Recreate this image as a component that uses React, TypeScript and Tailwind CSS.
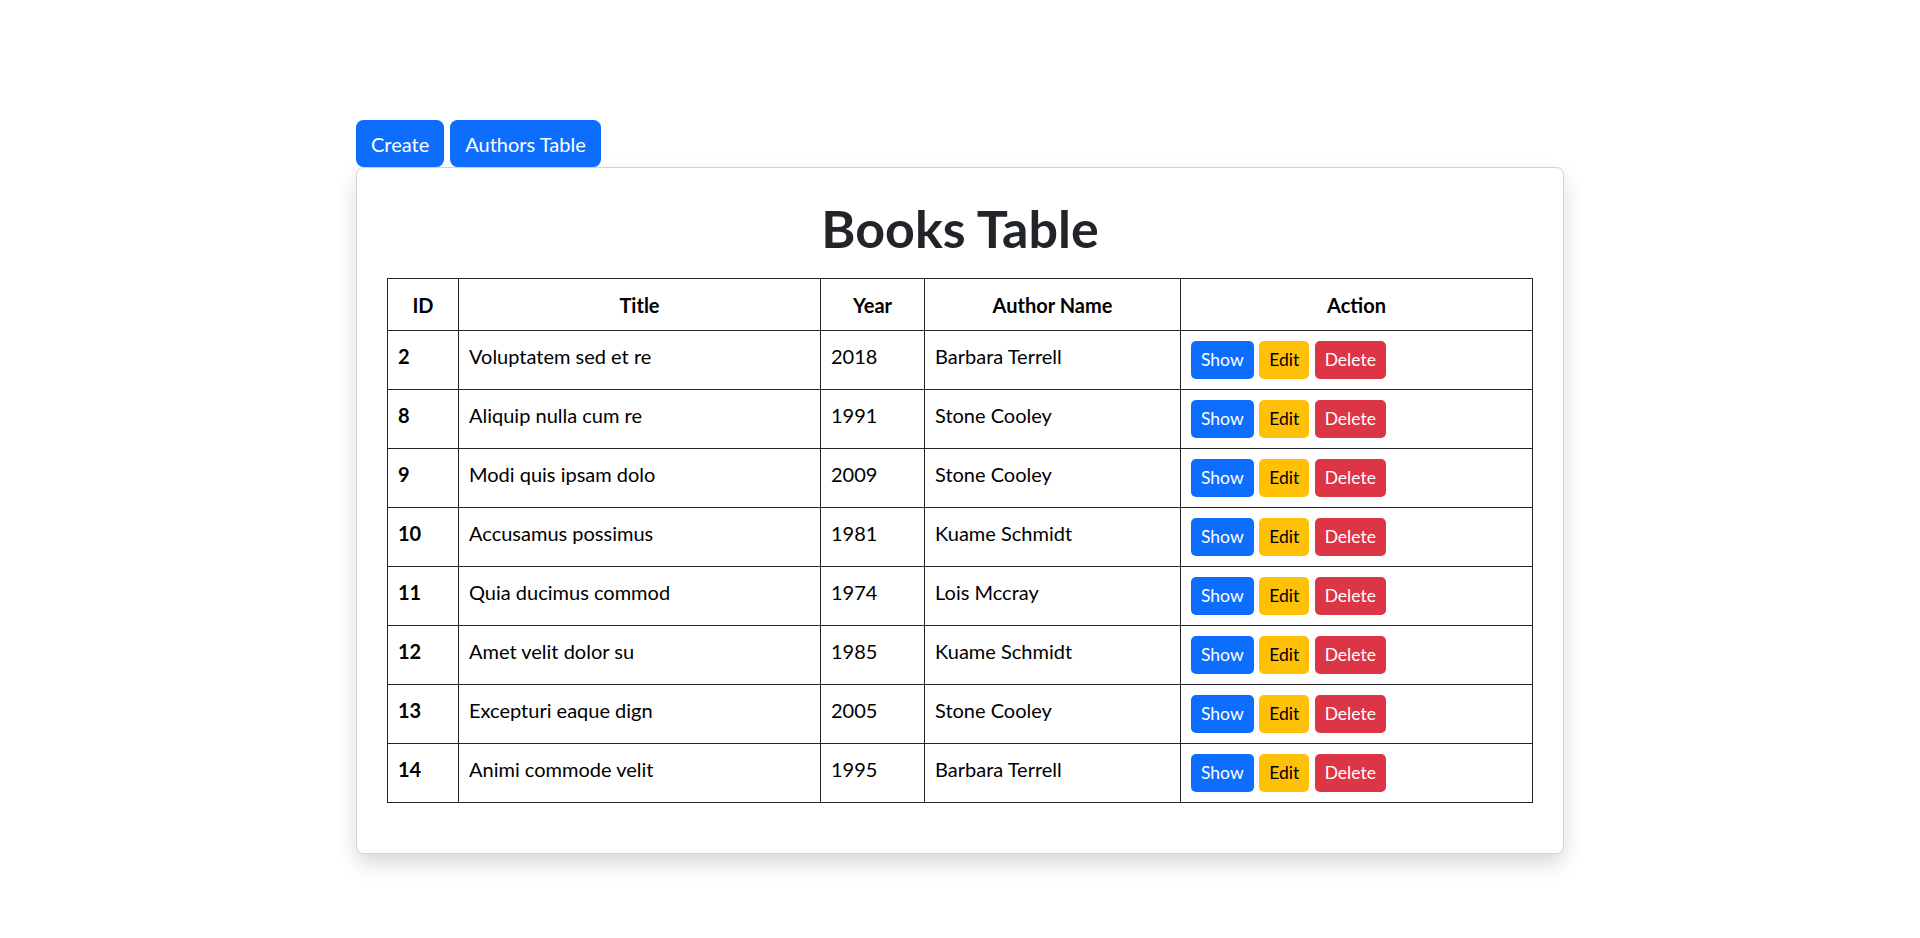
import React from "react";

const books = [
  { id: 2, title: "Voluptatem sed et re", year: 2018, author: "Barbara Terrell" },
  { id: 8, title: "Aliquip nulla cum re", year: 1991, author: "Stone Cooley" },
  { id: 9, title: "Modi quis ipsam dolo", year: 2009, author: "Stone Cooley" },
  { id: 10, title: "Accusamus possimus", year: 1981, author: "Kuame Schmidt" },
  { id: 11, title: "Quia ducimus commod", year: 1974, author: "Lois Mccray" },
  { id: 12, title: "Amet velit dolor su", year: 1985, author: "Kuame Schmidt" },
  { id: 13, title: "Excepturi eaque dign", year: 2005, author: "Stone Cooley" },
  { id: 14, title: "Animi commode velit", year: 1995, author: "Barbara Terrell" },
];

const th = "border border-[#212529] px-[10px] py-[10.5px] text-center font-bold";
const td = "border border-[#212529] px-[10px] py-[10px] align-top";

export default function App() {
  return (
    <div
      className="min-h-screen bg-white pt-[120px]"
      style={{ fontFamily: "Lato, 'Noto Sans', sans-serif" }}
    >
      <div className="mx-auto w-[1208px]">
        {/* top actions */}
        <div className="flex gap-[6px]">
          <button className="h-[47px] rounded-[7.5px] bg-[#0d6efd] px-[15px] text-[20px] leading-[30px] text-white">
            Create
          </button>
          <button className="h-[47px] rounded-[7.5px] bg-[#0d6efd] px-[15px] text-[20px] leading-[30px] text-white">
            Authors Table
          </button>
        </div>

        <div className="rounded-[7.5px] border border-[#d3d3d3] bg-white px-[30px] pb-[50px] shadow-[0_10px_20px_rgba(0,0,0,0.15)]">
          <h1 className="pt-[29px] pb-[19px] text-center text-[52px] font-bold leading-[62px] text-[#212529]">
            Books Table
          </h1>

          <table className="w-full table-fixed border-collapse border border-[#212529] text-[20px] leading-[30px] text-black">
            <colgroup>
              <col className="w-[71px]" />
              <col className="w-[362px]" />
              <col className="w-[104px]" />
              <col className="w-[256px]" />
              <col />
            </colgroup>
            <thead>
              <tr>
                <th className={th}>ID</th>
                <th className={th}>Title</th>
                <th className={th}>Year</th>
                <th className={th}>Author Name</th>
                <th className={th}>Action</th>
              </tr>
            </thead>
            <tbody>
              {books.map((b) => (
                <tr key={b.id}>
                  <td className={td + " font-bold"}>{b.id}</td>
                  <td className={td}>{b.title}</td>
                  <td className={td}>{b.year}</td>
                  <td className={td}>{b.author}</td>
                  <td className={td}>
                    <div className="flex gap-[5.5px]">
                      <button className="h-[38px] rounded-[5px] bg-[#0d6efd] px-[10px] text-[17.5px] text-white">
                        Show
                      </button>
                      <button className="h-[38px] rounded-[5px] bg-[#ffc107] px-[10px] text-[17.5px] text-black">
                        Edit
                      </button>
                      <button className="h-[38px] rounded-[5px] bg-[#dc3545] px-[10px] text-[17.5px] text-white">
                        Delete
                      </button>
                    </div>
                  </td>
                </tr>
              ))}
            </tbody>
          </table>
        </div>
      </div>
    </div>
  );
}
